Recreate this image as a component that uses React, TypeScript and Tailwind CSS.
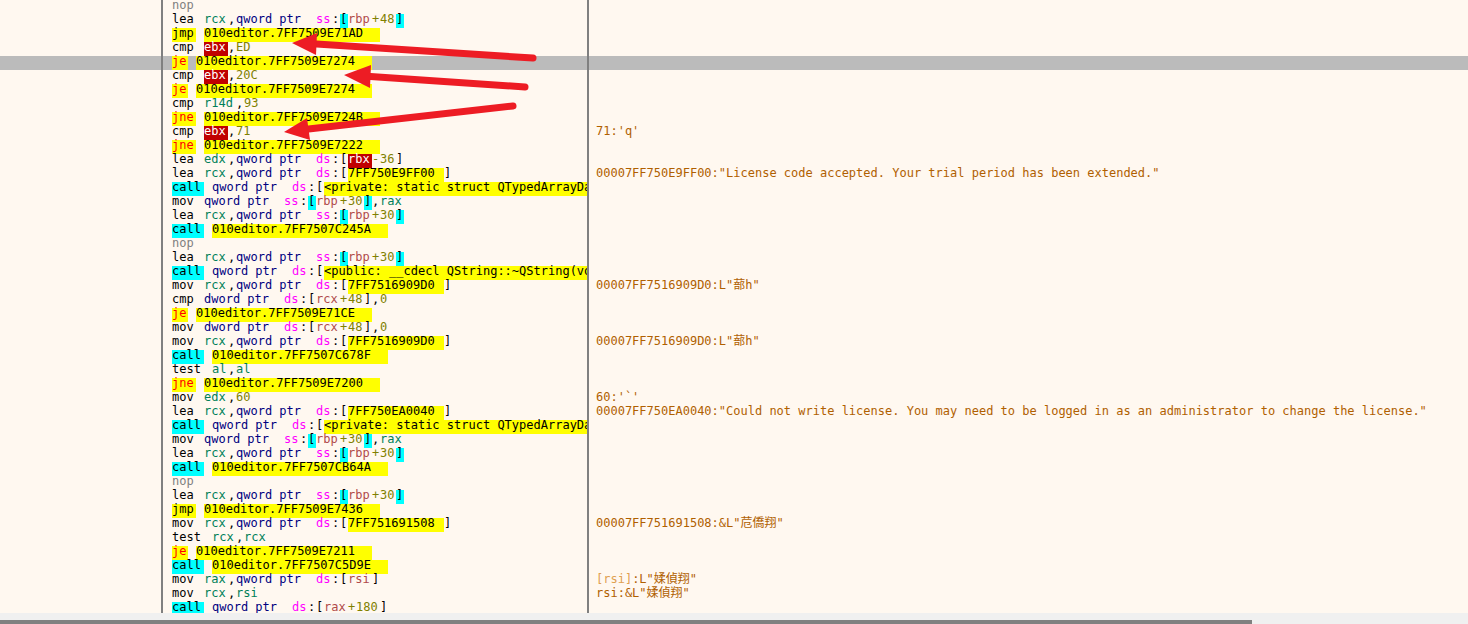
const regColor = "text-[#008058]";

type Tok = { t: string; c?: string; bg?: string };
type Row = { code: Tok[]; note?: string; noteHead?: string; selected?: boolean };

const tk = (t: string, c = "text-black", bg = ""): Tok => ({ t, c, bg });
const sp = () => tk(" ");
const reg = (t: string) => tk(t, regColor);
const hl = (t: string) => tk(t, "text-black", "bg-[#ffff00]");
const red = (t: string) => tk(t, "text-white", "bg-[#c00000]");
const num = (t: string) => tk(t, "text-[#808000]");
const inner = (t: string) => tk(t, "text-[#b04a4a]");
const seg = (t: string) => tk(t, "text-[#ff00ff]");
const ptr = (t: string) => tk(t, "text-[#000080]");
const comma = tk(",");
const callTok = tk("call", "text-black", "bg-[#00ffff]");

// x64dbg style jumps: yellow target, mnemonic colored by type
const jump = (m: string, target: string): Tok[] => [
  tk(m, m === "jmp" ? "text-black" : "text-[#ff0000]", "bg-[#ffff00]"),
  sp(),
  hl(`010editor.${target}`),
];
const call = (target: string): Tok[] => [callTok, sp(), hl(`010editor.${target}`)];

const stack = (offset: string): Tok[] => [
  seg("ss"),
  tk(":"),
  tk("[", "text-black", "bg-[#00ffff]"),
  inner("rbp"),
  num("+"),
  num(offset),
  tk("]", "text-black", "bg-[#00ffff]"),
];
const leaStack = (r: string, offset: string): Tok[] => [tk("lea "), reg(r), comma, ptr("qword ptr "), ...stack(offset)];
const leaAddr = (m: string, r: string, addr: string): Tok[] => [
  tk(`${m} `),
  reg(r),
  comma,
  ptr("qword ptr "),
  seg("ds"),
  tk(":"),
  tk("["),
  hl(addr),
  tk("]"),
];
const callPtr = (rest: Tok[]): Tok[] => [callTok, sp(), ptr("qword ptr "), seg("ds"), tk(":"), tk("["), ...rest];
const dwordRcx = (m: string): Tok[] => [
  tk(`${m} `),
  ptr("dword ptr "),
  seg("ds"),
  tk(":"),
  tk("["),
  inner("rcx"),
  num("+"),
  num("48"),
  tk("]"),
  comma,
  num("0"),
];
const nop: Tok[] = [tk("nop", "text-[#808080]")];
const cmpEbx = (v: string): Tok[] => [tk("cmp "), red("ebx"), comma, num(v)];
const movStack: Tok[] = [tk("mov "), ptr("qword ptr "), ...stack("30"), comma, reg("rax")];
const qtyped = hl("<private: static struct QTypedArrayDa");

const rows: Row[] = [
  { code: nop },
  { code: leaStack("rcx", "48") },
  { code: jump("jmp", "7FF7509E71AD") },
  { code: cmpEbx("ED") },
  { code: jump("je", "7FF7509E7274"), selected: true },
  { code: cmpEbx("20C") },
  { code: jump("je", "7FF7509E7274") },
  { code: [tk("cmp "), reg("r14d"), comma, num("93")] },
  { code: jump("jne", "7FF7509E724B") },
  { code: cmpEbx("71"), note: "71:'q'" },
  { code: jump("jne", "7FF7509E7222") },
  {
    code: [tk("lea "), reg("edx"), comma, ptr("qword ptr "), seg("ds"), tk(":"), tk("["), red("rbx"), num("-"), num("36"), tk("]")],
  },
  {
    code: leaAddr("lea", "rcx", "7FF750E9FF00"),
    note: '00007FF750E9FF00:"License code accepted. Your trial period has been extended."',
  },
  { code: callPtr([qtyped]) },
  { code: movStack },
  { code: leaStack("rcx", "30") },
  { code: call("7FF7507C245A") },
  { code: nop },
  { code: leaStack("rcx", "30") },
  { code: callPtr([hl("<public: __cdecl QString::~QString(vo")]) },
  { code: leaAddr("mov", "rcx", "7FF7516909D0"), note: '00007FF7516909D0:L"蔀h"' },
  { code: dwordRcx("cmp") },
  { code: jump("je", "7FF7509E71CE") },
  { code: dwordRcx("mov") },
  { code: leaAddr("mov", "rcx", "7FF7516909D0"), note: '00007FF7516909D0:L"蔀h"' },
  { code: call("7FF7507C678F") },
  { code: [tk("test "), reg("al"), comma, reg("al")] },
  { code: jump("jne", "7FF7509E7200") },
  { code: [tk("mov "), reg("edx"), comma, num("60")], note: "60:'`'" },
  {
    code: leaAddr("lea", "rcx", "7FF750EA0040"),
    note: '00007FF750EA0040:"Could not write license. You may need to be logged in as an administrator to change the license."',
  },
  { code: callPtr([qtyped]) },
  { code: movStack },
  { code: leaStack("rcx", "30") },
  { code: call("7FF7507CB64A") },
  { code: nop },
  { code: leaStack("rcx", "30") },
  { code: jump("jmp", "7FF7509E7436") },
  { code: leaAddr("mov", "rcx", "7FF751691508"), note: '00007FF751691508:&L"苊僑翔"' },
  { code: [tk("test "), reg("rcx"), comma, reg("rcx")] },
  { code: jump("je", "7FF7509E7211") },
  { code: call("7FF7507C5D9E") },
  {
    code: [tk("mov "), reg("rax"), comma, ptr("qword ptr "), seg("ds"), tk(":"), tk("["), inner("rsi"), tk("]")],
    noteHead: "[rsi]",
    note: ':L"媃偵翔"',
  },
  { code: [tk("mov "), reg("rcx"), comma, reg("rsi")], note: 'rsi:&L"媃偵翔"' },
  {
    code: [callTok, sp(), ptr("qword ptr "), seg("ds"), tk(":"), tk("["), inner("rax"), num("+"), num("180"), tk("]")],
  },
];

function Token({ tok }: { tok: Tok }) {
  // every token sits on an 8px cell grid, glyphs are narrower than that
  return (
    <span
      className={`inline-block h-[14px] shrink-0 whitespace-pre ${tok.c ?? ""} ${tok.bg ?? ""}`}
      style={{ width: tok.t.length * 8 }}
    >
      <span className="-mt-[2px] block leading-[14px]">{tok.t}</span>
    </span>
  );
}

function Arrow({ tail, tip, a, b }: { tail: number[]; tip: number[]; a: number[]; b: number[] }) {
  const neck = [(a[0] + b[0]) / 2, (a[1] + b[1]) / 2];
  return (
    <g>
      <line x1={tail[0]} y1={tail[1]} x2={neck[0]} y2={neck[1]} stroke="#ed1c24" strokeWidth="7" strokeLinecap="round" />
      <polygon points={`${tip[0]},${tip[1]} ${a[0]},${a[1]} ${b[0]},${b[1]}`} fill="#ed1c24" />
    </g>
  );
}

export default function App() {
  return (
    <div className="relative flex h-[624px] w-[1468px] flex-col overflow-hidden bg-[#fff8f0] font-['DejaVu_Sans_Mono','Noto_Sans_CJK_SC',monospace] text-[12px]">
      <div className="h-[613px] overflow-hidden">
        {rows.map((row, i) => (
          <div key={i} className={`flex h-[14px] ${row.selected ? "bg-[#bbbbbb]" : ""}`}>
            <div className="h-[14px] w-[163px] shrink-0 border-r-2 border-[#808080]" />
            <div className="flex h-[14px] w-[426px] shrink-0 overflow-x-clip border-r-2 border-[#808080] pl-[9px]">
              {row.code.map((tok, j) => (
                <Token key={j} tok={tok} />
              ))}
            </div>
            {row.note && (
              <div className="h-[14px] whitespace-pre pl-[7px] text-[#b06000]">
                <div className="-mt-[2px] leading-[14px]">
                  {row.noteHead && <span className="text-[#e0a050]">{row.noteHead}</span>}
                  {row.note}
                </div>
              </div>
            )}
          </div>
        ))}
      </div>
      <div className="flex h-[11px] flex-col justify-end bg-[#f0f0f0]">
        <div className="h-[4px] w-[1252px] bg-[#808080]" />
      </div>
      <svg className="pointer-events-none absolute left-0 top-0" width="1468" height="624">
        <Arrow tail={[533, 58]} tip={[292, 43]} a={[317, 33]} b={[316, 55]} />
        <Arrow tail={[525, 87]} tip={[344, 75]} a={[371, 65]} b={[370, 88]} />
        <Arrow tail={[513, 106]} tip={[284, 132]} a={[307, 118]} b={[310, 140]} />
      </svg>
    </div>
  );
}
